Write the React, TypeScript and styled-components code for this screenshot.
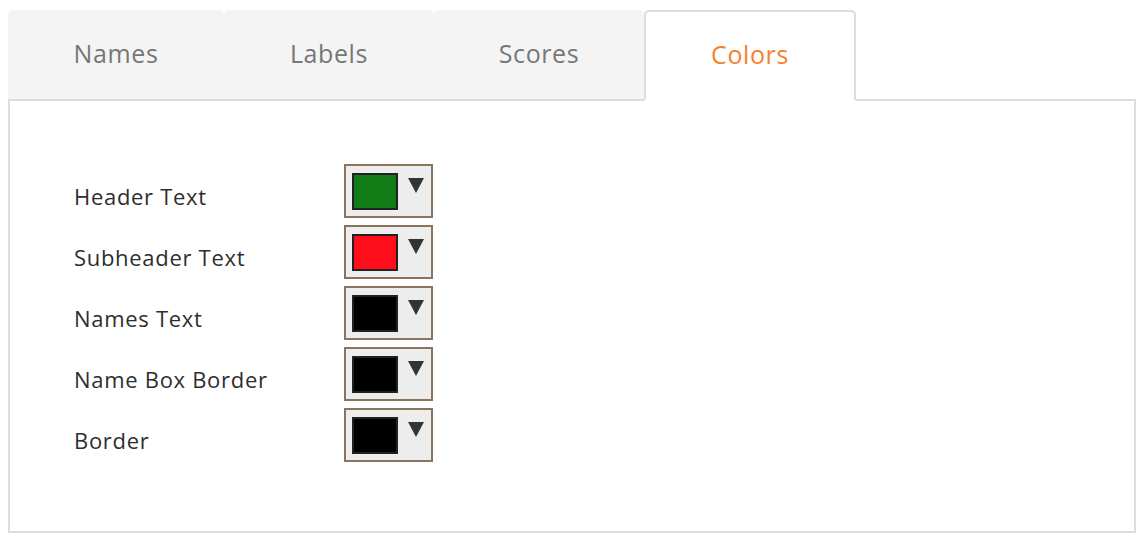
import React from 'react';
import styled, { createGlobalStyle } from 'styled-components';

const GlobalStyle = createGlobalStyle`
	body {
		margin: 0;
		background: #ffffff;
		font-family: 'Open Sans', 'Liberation Sans', sans-serif;
	}
`;

const Page = styled.div`
	padding: 10px 8px 0 8px;
	width: 1128px;
`;

const TabBar = styled.div`
	display: flex;
	position: relative;
	z-index: 1;
`;

const Tab = styled.div<{ $width: number; $active?: boolean }>`
	width: ${(p) => p.$width}px;
	box-sizing: border-box;
	display: flex;
	align-items: center;
	justify-content: center;
	font-size: 25px;
	letter-spacing: 0.6px;
	color: ${(p) => (p.$active ? '#f7802b' : '#777777')};
	background: ${(p) => (p.$active ? '#ffffff' : '#f4f4f4')};
	border: ${(p) => (p.$active ? '2px solid #dddddd' : 'none')};
	border-bottom: ${(p) => (p.$active ? '2px solid #ffffff' : 'none')};
	border-radius: 5px 5px 0 0;
	margin-bottom: ${(p) => (p.$active ? '-2px' : '0')};
	height: ${(p) => (p.$active ? 91 : 89)}px;
	padding-bottom: 4px;
	cursor: pointer;
`;

const Panel = styled.div`
	border: 2px solid #dddddd;
	height: 434px;
	box-sizing: border-box;
	padding: 63px 0 0 64px;
`;

const Rows = styled.div`
	display: flex;
	flex-direction: column;
	gap: 7px;
`;

const Row = styled.div`
	display: flex;
	align-items: center;
`;

const Label = styled.div`
	width: 270px;
	font-size: 22px;
	letter-spacing: 0.7px;
	color: #2e2e2e;
	padding-top: 10px;
`;

const Picker = styled.div`
	width: 89px;
	height: 54px;
	box-sizing: border-box;
	border: 2px solid #8b735c;
	background: #ededed;
	display: flex;
	align-items: center;
	padding-left: 6px;
	gap: 10px;
`;

const Swatch = styled.div<{ $color: string }>`
	width: 46px;
	height: 37px;
	box-sizing: border-box;
	border: 2px solid #222222;
	background: ${(p) => p.$color};
`;

const Arrow = styled.div`
	width: 0;
	height: 0;
	border-left: 8px solid transparent;
	border-right: 8px solid transparent;
	border-top: 15px solid #333333;
	margin-bottom: 12px;
`;

const tabs = [
	{ name: 'Names', width: 216 },
	{ name: 'Labels', width: 210 },
	{ name: 'Scores', width: 210 },
	{ name: 'Colors', width: 212, active: true },
];

const colors = [
	{ label: 'Header Text', color: '#117b15' },
	{ label: 'Subheader Text', color: '#fe0d1b' },
	{ label: 'Names Text', color: '#000000' },
	{ label: 'Name Box Border', color: '#000000' },
	{ label: 'Border', color: '#000000' },
];

const App: React.FC = () => {
	return (
		<>
			<GlobalStyle />
			<Page>
				<TabBar>
					{tabs.map((t) => (
						<Tab key={t.name} $width={t.width} $active={t.active}>
							{t.name}
						</Tab>
					))}
				</TabBar>
				<Panel>
					<Rows>
						{colors.map((c) => (
							<Row key={c.label}>
								<Label>{c.label}</Label>
								<Picker>
									<Swatch $color={c.color} />
									<Arrow />
								</Picker>
							</Row>
						))}
					</Rows>
				</Panel>
			</Page>
		</>
	);
};

export default App;
